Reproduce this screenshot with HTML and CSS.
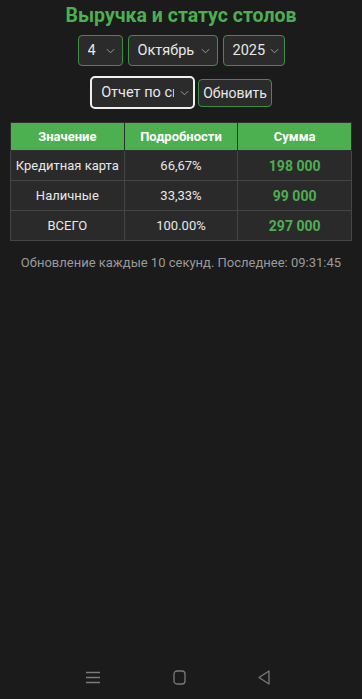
FILE: index.html
```html
<!DOCTYPE html>
<html lang="ru">
<head>
    <meta charset="UTF-8">
    <meta name="viewport" content="width=device-width, initial-scale=1.0">
    <title>Выручка и статус столов</title>
    <link rel="stylesheet" href="styles.css">
</head>
<body>
    <main class="page">
        <h1 class="title">Выручка и статус столов</h1>

        <div class="controls">
            <label class="select-wrap day">
                <select class="select"><option>4</option></select>
                <svg class="chevron" viewBox="0 0 10 6"><path d="M1 1l4 4 4-4"/></svg>
            </label>
            <label class="select-wrap month">
                <select class="select"><option>Октябрь</option></select>
                <svg class="chevron" viewBox="0 0 10 6"><path d="M1 1l4 4 4-4"/></svg>
            </label>
            <label class="select-wrap year">
                <select class="select"><option>2025</option></select>
                <svg class="chevron" viewBox="0 0 10 6"><path d="M1 1l4 4 4-4"/></svg>
            </label>
        </div>

        <div class="controls second">
            <label class="select-wrap report">
                <select class="select"><option>Отчет по смене</option></select>
                <svg class="chevron" viewBox="0 0 10 6"><path d="M1 1l4 4 4-4"/></svg>
            </label>
            <button type="button" class="refresh">Обновить</button>
        </div>

        <table class="report-table">
            <thead>
                <tr>
                    <th>Значение</th>
                    <th>Подробности</th>
                    <th>Сумма</th>
                </tr>
            </thead>
            <tbody>
                <tr>
                    <td>Кредитная карта</td>
                    <td>66,67%</td>
                    <td class="amount">198 000</td>
                </tr>
                <tr>
                    <td>Наличные</td>
                    <td>33,33%</td>
                    <td class="amount">99 000</td>
                </tr>
                <tr>
                    <td>ВСЕГО</td>
                    <td>100.00%</td>
                    <td class="amount">297 000</td>
                </tr>
            </tbody>
        </table>

        <p class="status">Обновление каждые 10 секунд. Последнее: 09:31:45</p>
    </main>

    <nav class="nav-bar">
        <svg class="nav-icon menu" viewBox="0 0 16 13"><path d="M1 1.5h14M1 6.5h14M1 11.5h14"/></svg>
        <svg class="nav-icon home" viewBox="0 0 13 15"><rect x="1" y="1" width="11" height="13" rx="3"/></svg>
        <svg class="nav-icon back" viewBox="0 0 12 15"><path d="M11 1v13L1 7.5z"/></svg>
    </nav>
</body>
</html>
```

FILE: styles.css
```css
* {
    box-sizing: border-box;
}

body {
    margin: 0;
    height: 100vh;
    display: flex;
    flex-direction: column;
    background-color: #1b1b1b;
    color: #e8e8e8;
    font-family: Roboto, "Noto Sans", sans-serif;
}

.page {
    flex: 1;
    padding: 4px 10px 0;
}

.title {
    margin: 0 0 7px;
    text-align: center;
    font-size: 19.5px;
    line-height: 24px;
    font-weight: 700;
    color: #4caf50;
}

.controls {
    display: flex;
    justify-content: center;
    align-items: center;
    gap: 5px;
    margin-bottom: 10px;
}

.controls.second {
    gap: 3px;
    margin-bottom: 13px;
}

.select-wrap {
    position: relative;
    display: block;
}

.select {
    appearance: none;
    -webkit-appearance: none;
    width: 100%;
    height: 31px;
    margin: 0;
    padding: 0 16px 0 9px;
    border: 1px solid #3f8f43;
    border-radius: 4px;
    background-color: #2b2b2b;
    color: #e8e8e8;
    font-family: inherit;
    font-size: 14.5px;
    outline: none;
}

.chevron {
    position: absolute;
    right: 8px;
    top: 13px;
    width: 9px;
    height: 6px;
    fill: none;
    stroke: #9a9a9a;
    stroke-width: 1.1;
    pointer-events: none;
}

.day { width: 45px; }
.month { width: 90px; }
.year { width: 62px; }

.year .chevron {
    right: 6px;
}

.report {
    width: 105px;
}

.report .select {
    height: 33px;
    border: 2px solid #f0f0f0;
    border-radius: 5px;
    padding-left: 9px;
    padding-right: 19px;
}

.report .chevron {
    right: 6px;
    top: 14px;
}

.refresh {
    height: 28px;
    padding: 0 4px;
    border: 1px solid #3f8f43;
    border-radius: 4px;
    background-color: #2b2b2b;
    color: #e8e8e8;
    font-family: inherit;
    font-size: 14px;
}

.report-table {
    width: 100%;
    border-collapse: collapse;
    table-layout: fixed;
    font-size: 13px;
}

.report-table th,
.report-table td {
    border: 1px solid #454545;
    text-align: center;
    padding: 0;
}

.report-table th {
    height: 28px;
    background-color: #4caf50;
    color: #ffffff;
    font-size: 13px;
    font-weight: 700;
    border-color: #2f2f2f;
}

.report-table td {
    height: 30px;
    background-color: #2a2a2a;
    color: #e8e8e8;
}

.report-table td.amount {
    color: #4caf50;
    font-weight: 700;
    font-size: 14px;
}

.status {
    margin: 14px 0 0;
    text-align: center;
    font-size: 13px;
    color: #9a9a9a;
}

.nav-bar {
    height: 44px;
    display: flex;
    justify-content: center;
    align-items: center;
    gap: 72px;
    padding-right: 7px;
}

.nav-icon {
    fill: none;
    stroke: #7a7a7a;
    stroke-width: 1.3;
    stroke-linejoin: round;
}

.menu { width: 16px; height: 13px; }
.home { width: 13px; height: 15px; }
.back { width: 12px; height: 15px; }
```
